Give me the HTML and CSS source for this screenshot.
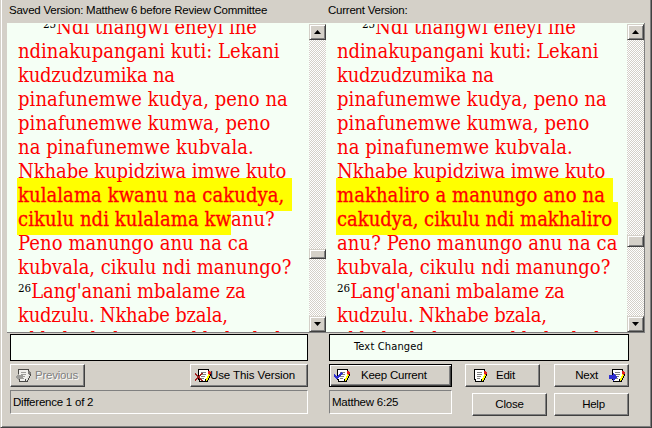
FILE: index.html
```
<!DOCTYPE html>
<html lang="en">
<head>
<meta charset="utf-8">
<title>Compare Versions</title>
<link rel="stylesheet" href="styles.css">
</head>
<body>
<svg class="defs" width="0" height="0">
  <defs>
    <g id="page">
      <path class="paper" d="M3.500 1.500H13.500V4.500L12.500 13.500H4.500V11.500H3.500Z"/>
      <path class="rules" d="M6 4.500H11M6 6.500H11M6 8.500H10M6 10.500H9"/>
    </g>
    <g id="pencil">
      <path class="p-edge" d="M15 6h1v2h-1v2h-1v2h-1v1h-1v1h-2v-3h1v2h1v-1h1v-2h1v-2h1z"/>
      <path class="p-body" d="M13 5h1v1h1v2h-1v2h-1v2h-1v1h-1v-3h1v-2h1z"/>
      <path class="p-tip" d="M13 3h2v1h1v2h-1v1h-1v-1h-1z"/>
    </g>
  </defs>
</svg>
<main class="window">
  <section class="side">
    <h2 class="caption">Saved Version: Matthew 6 before Review Committee</h2>
    <div class="pane">
      <div class="text">
        <p class="first"><sup>25</sup>Ndi thangwi eneyi ine</p>
        <p>ndinakupangani kuti: Lekani</p>
        <p class="tight">kudzudzumika na</p>
        <p class="loose">pinafunemwe kudya, peno na</p>
        <p class="loose">pinafunemwe kumwa, peno</p>
        <p class="loose">na pinafunemwe kubvala.</p>
        <p class="snug">Nkhabe kupidziwa imwe kuto</p>
        <p class="loose mark m275">kulalama kwanu na cakudya,</p>
        <p class="loose mark m214"><b>cikulu ndi kulalama kw</b>anu?</p>
        <p class="loose">Peno manungo anu na ca</p>
        <p>kubvala, cikulu ndi manungo?</p>
        <p class="snug"><sup>26</sup>Lang'anani mbalame za</p>
        <p class="tight">kudzulu. Nkhabe bzala,</p>
        <p>nkhabe kubvuna, nkhabe kub</p>
      </div>
      <div class="scroll">
        <span class="knob up"></span><span class="track t209"></span><span class="knob thumb10"></span><span class="track fill"></span><span class="knob down"></span>
      </div>
    </div>
    <div class="controls left">
      <div class="note"></div>
      <div class="row split">
        <button class="btn prev" disabled>
          <svg width="16" height="16"><use href="#page"/><use href="#pencil"/><path class="arrow" d="M0 9L4 5V7H8V11H4V13Z"/></svg>Previous</button>
        <button class="btn use">
          <svg width="16" height="16"><use href="#page"/><use href="#pencil"/><path class="cross" d="M0 5L7 13M7 5L0 13"/></svg>Use This Version</button>
      </div>
      <div class="status">Difference 1 of 2</div>
    </div>
  </section>
  <section class="side">
    <h2 class="caption">Current Version:</h2>
    <div class="pane">
      <div class="text">
        <p class="first"><sup>25</sup>Ndi thangwi eneyi ine</p>
        <p>ndinakupangani kuti: Lekani</p>
        <p class="tight">kudzudzumika na</p>
        <p class="loose">pinafunemwe kudya, peno na</p>
        <p class="loose">pinafunemwe kumwa, peno</p>
        <p class="loose">na pinafunemwe kubvala.</p>
        <p class="snug">Nkhabe kupidziwa imwe kuto</p>
        <p class="loose mark m277">makhaliro a manungo ano na</p>
        <p class="mark m282">cakudya, cikulu ndi makhaliro</p>
        <p class="loose">anu? Peno manungo anu na ca</p>
        <p>kubvala, cikulu ndi manungo?</p>
        <p class="snug"><sup>26</sup>Lang'anani mbalame za</p>
        <p class="tight">kudzulu. Nkhabe bzala,</p>
        <p>nkhabe kubvuna, nkhabe kub</p>
      </div>
      <div class="scroll">
        <span class="knob up"></span><span class="track t195"></span><span class="knob thumb12"></span><span class="track fill"></span><span class="knob down"></span>
      </div>
    </div>
    <div class="controls">
      <div class="note">Text Changed</div>
      <div class="lower">
        <div class="current">
          <button class="btn keep">
            <svg width="16" height="16"><use href="#page"/><use href="#pencil"/><path class="check" d="M0 7L3 10L8 5"/></svg>Keep Current</button>
          <div class="status">Matthew 6:25</div>
        </div>
        <div class="actions">
          <div class="row split">
            <button class="btn edit">
              <svg width="16" height="16"><use href="#page"/><use href="#pencil"/></svg>Edit</button>
            <button class="btn next">Next
              <svg width="16" height="16"><use href="#page"/><use href="#pencil"/><path class="arrow" d="M8 9L4 5V7H0V11H4V13Z"/></svg></button>
          </div>
          <div class="row end">
            <button class="btn">Close</button>
            <button class="btn help">Help</button>
          </div>
        </div>
      </div>
    </div>
  </section>
</main>
</body>
</html>
```
FILE: styles.css
```
* { box-sizing: border-box; }
body {
  margin: 0;
  background: #d4d0c8;
  color: #000;
  font: 11.5px/14px "Liberation Sans", Arial, sans-serif;
  letter-spacing: -0.23px;
}
.defs { display: block; height: 0; }
.window {
  display: grid;
  grid-template-columns: 319px 319px;
  width: 652px;
  height: 428px;
  padding-left: 6px;
  border: 1px solid #404040;
  border-width: 0 1px 1px;
  border-left-color: #d4d0c8;
  box-shadow: inset 1px 0 #fff, inset -1px -1px #808080;
  overflow: hidden;
}
.caption {
  height: 23px;
  margin: 0;
  padding: 3px 0 0 2px;
  font-size: inherit;
  font-weight: normal;
}
.pane {
  display: flex;
  height: 310px;
  background: #f5fff5;
  border-bottom: 1px solid #808080;
}
.side:last-child .pane { border-right: 1px solid #808080; }
.text {
  flex: 1;
  height: 308px;
  margin-top: 1px;
  padding-left: 11px;
  overflow: hidden;
  isolation: isolate;
  color: #f00;
  font: 20px/24px "DejaVu Serif Condensed", "DejaVu Serif", serif;
  letter-spacing: 0;
}
.text p {
  position: relative;
  height: 24px;
  margin: 0;
  white-space: nowrap;
}
.text p:first-child { margin-top: -9px; }
.text .first { padding-left: 25px; }
.text b { font-weight: normal; -webkit-text-stroke: 0.3px #f00; }
.text sup {
  color: #000;
  font-size: 11.5px;
  line-height: 0;
  letter-spacing: 0;
  vertical-align: 6px;
}
.text .tight { letter-spacing: -0.22px; }
.text .snug { letter-spacing: -0.08px; }
.text .loose { letter-spacing: 0.08px; }
.mark { -webkit-text-stroke: 0.3px #f00; }
.m214 { -webkit-text-stroke: 0; }
.mark::before {
  content: "";
  position: absolute;
  z-index: -1;
  top: -5px;
  left: -1px;
  height: 33px;
  background: #ff0;
}
.m275::before { width: 275px; }
.m214::before { width: 214px; }
.m277::before { width: 277px; }
.m282::before { width: 282px; }
.scroll {
  display: flex;
  flex-direction: column;
  width: 17px;
  height: 309px;
  padding-top: 1px;
}
.knob {
  display: flex;
  align-items: center;
  justify-content: center;
  flex: none;
  height: 16px;
  background: #d4d0c8;
  border: 1px solid;
  border-color: #d4d0c8 #404040 #404040 #d4d0c8;
  box-shadow: inset 1px 1px #fff, inset -1px -1px #808080;
}
.thumb10 { height: 10px; }
.thumb12 { height: 12px; }
.track { background: repeating-conic-gradient(#fff 0 25%, #d4d0c8 0 50%) 0 0 / 2px 2px; }
.t209 { height: 209px; }
.t195 { height: 195px; }
.fill { flex: 1; }
.knob.up::before, .knob.down::before {
  content: "";
  width: 7px;
  height: 4px;
  background: #000;
  clip-path: polygon(50% 0, 100% 100%, 0 100%);
}
.knob.down::before { clip-path: polygon(0 0, 100% 0, 50% 100%); }
.controls {
  width: 303px;
  padding: 1px 0 0 3px;
}
.controls.left { width: 301px; }
.note {
  height: 27px;
  padding: 4px 0 0 24px;
  background: #f5fff5;
  border: 1px solid #000;
  font: 11px/16px "DejaVu Sans Condensed", "DejaVu Sans", sans-serif;
  letter-spacing: 0.15px;
}
.row { display: flex; margin-top: 3px; }
.split { justify-content: space-between; }
.end { justify-content: flex-end; gap: 7px; margin-top: 6px; }
.lower { display: flex; justify-content: space-between; }
.actions { width: 164px; }
.btn {
  display: flex;
  align-items: center;
  justify-content: center;
  width: 75px;
  height: 23px;
  padding: 0 0 2px;
  background: #d4d0c8;
  border: 1px solid;
  border-color: #fff #404040 #404040 #fff;
  border-radius: 0;
  box-shadow: inset -1px -1px #808080;
  color: #000;
  font: inherit;
  letter-spacing: inherit;
  white-space: nowrap;
}
.btn svg { flex: none; margin-top: 3px; shape-rendering: crispEdges; }
.prev {
  justify-content: flex-start;
  padding-left: 4px;
  color: #808080;
  text-shadow: 1px 1px #fff;
}
.prev svg { margin-right: 4px; }
.use { width: 118px; justify-content: flex-start; padding-left: 4px; letter-spacing: -0.1px; }
.use svg { margin-right: -1px; }
.keep {
  width: 123px;
  margin-top: 3px;
  justify-content: flex-start;
  padding-left: 4px;
  border-color: #000;
  box-shadow: inset 1px 1px #fff, inset -1px -1px #404040, inset -2px -2px #808080;
}
.keep svg { margin-right: 11px; }
.edit { justify-content: flex-start; padding-left: 5px; }
.edit svg { margin-right: 9px; }
.next { justify-content: flex-end; padding-right: 3px; }
.next svg { margin-left: 11px; }
.help { padding-left: 4px; }
.status {
  height: 24px;
  margin-top: 3px;
  padding: 4px 2px;
  border: 1px solid;
  border-color: #808080 #fff #fff #808080;
}
.paper { fill: #fff; stroke: #000; }
.rules { fill: none; stroke: #808080; }
.p-edge { fill: #000; }
.p-body { fill: #ff0; }
.p-tip { fill: #e02020; }
.arrow { fill: #3030d0; }
.cross { fill: none; stroke: #a02020; stroke-width: 1.5; }
.check { fill: none; stroke: #3030d0; stroke-width: 2; }
.prev .paper { fill: #e4e2dc; stroke: #808080; }
.prev .arrow { fill: #808080; }
.prev svg { filter: grayscale(1) opacity(0.65); }
```
